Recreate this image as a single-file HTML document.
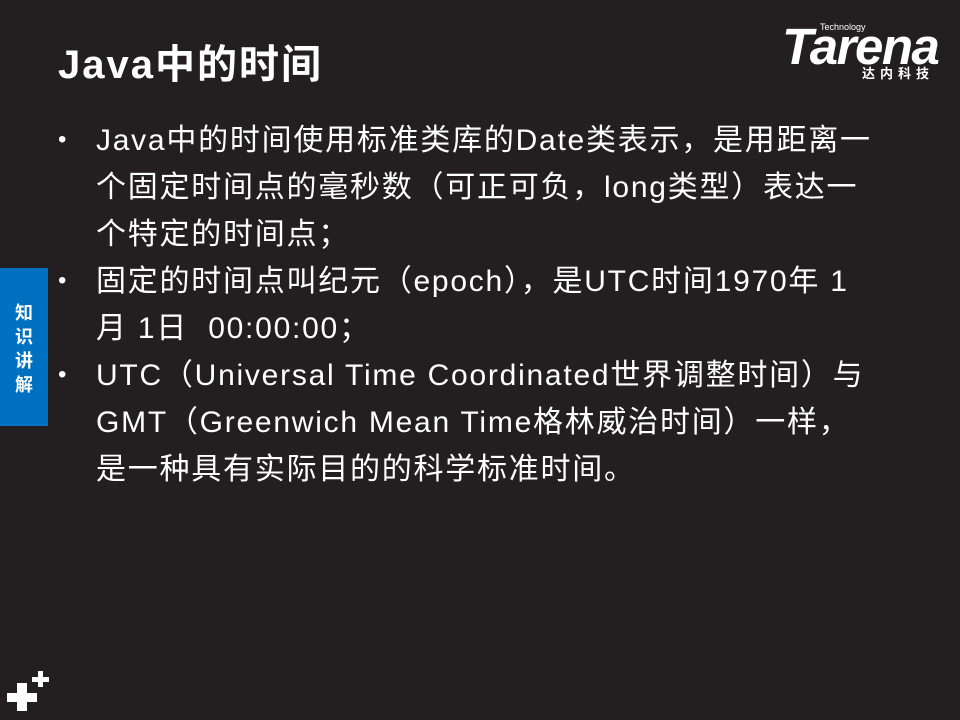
<!DOCTYPE html>
<html><head><meta charset="utf-8"><style>
body{margin:0;width:960px;height:720px;background:#231f20;position:relative;overflow:hidden;font-family:"Liberation Sans","Noto Sans CJK SC",sans-serif;color:#fff}
.t{position:absolute;left:58px;top:40px;font-size:40px;font-weight:bold;line-height:50px;letter-spacing:2px}
.b{position:absolute;left:96px;font-size:30px;line-height:47px;white-space:nowrap;letter-spacing:1.75px}
.d{position:absolute;left:58px;font-size:24px}
.tab{position:absolute;left:0;top:268px;width:48px;height:158px;background:#0070c0;font-size:18px;font-weight:bold;line-height:24px;text-align:center;padding-top:33px;box-sizing:border-box}
.p{position:absolute;background:#fff}
</style></head><body>
<div class="t">Java中的时间</div>
<div style="position:absolute;left:782px;top:18px;width:170px;height:64px">
<div style="position:absolute;left:38px;top:4px;font-size:9px">Technology</div>
<div style="position:absolute;left:0;top:6px;font-size:51px;font-weight:bold;font-style:italic;letter-spacing:-1.5px;line-height:46px">Tarena</div>
<div style="position:absolute;left:80px;top:45px;font-size:13px;font-weight:bold;letter-spacing:5px">达内科技</div>
</div>
<div class="d" style="top:126px">•</div>
<div class="b" style="top:117px">Java中的时间使用标准类库的Date类表示，是用距离一<br>个固定时间点的毫秒数（可正可负，long类型）表达一<br>个特定的时间点；</div>
<div class="d" style="top:267px">•</div>
<div class="b" style="top:258px">固定的时间点叫纪元（epoch），是UTC时间1970年 1<br>月 1日&nbsp; 00:00:00；</div>
<div class="d" style="top:361px">•</div>
<div class="b" style="top:352px">UTC（Universal Time Coordinated世界调整时间）与<br>GMT（Greenwich Mean Time格林威治时间）一样，<br>是一种具有实际目的的科学标准时间。</div>
<div class="tab">知<br>识<br>讲<br>解</div>
<div class="p" style="left:7px;top:693px;width:30px;height:9px"></div>
<div class="p" style="left:17px;top:683px;width:10px;height:28px"></div>
<div class="p" style="left:32px;top:677px;width:17px;height:5px"></div>
<div class="p" style="left:38px;top:671px;width:5px;height:16px"></div>
</body></html>
